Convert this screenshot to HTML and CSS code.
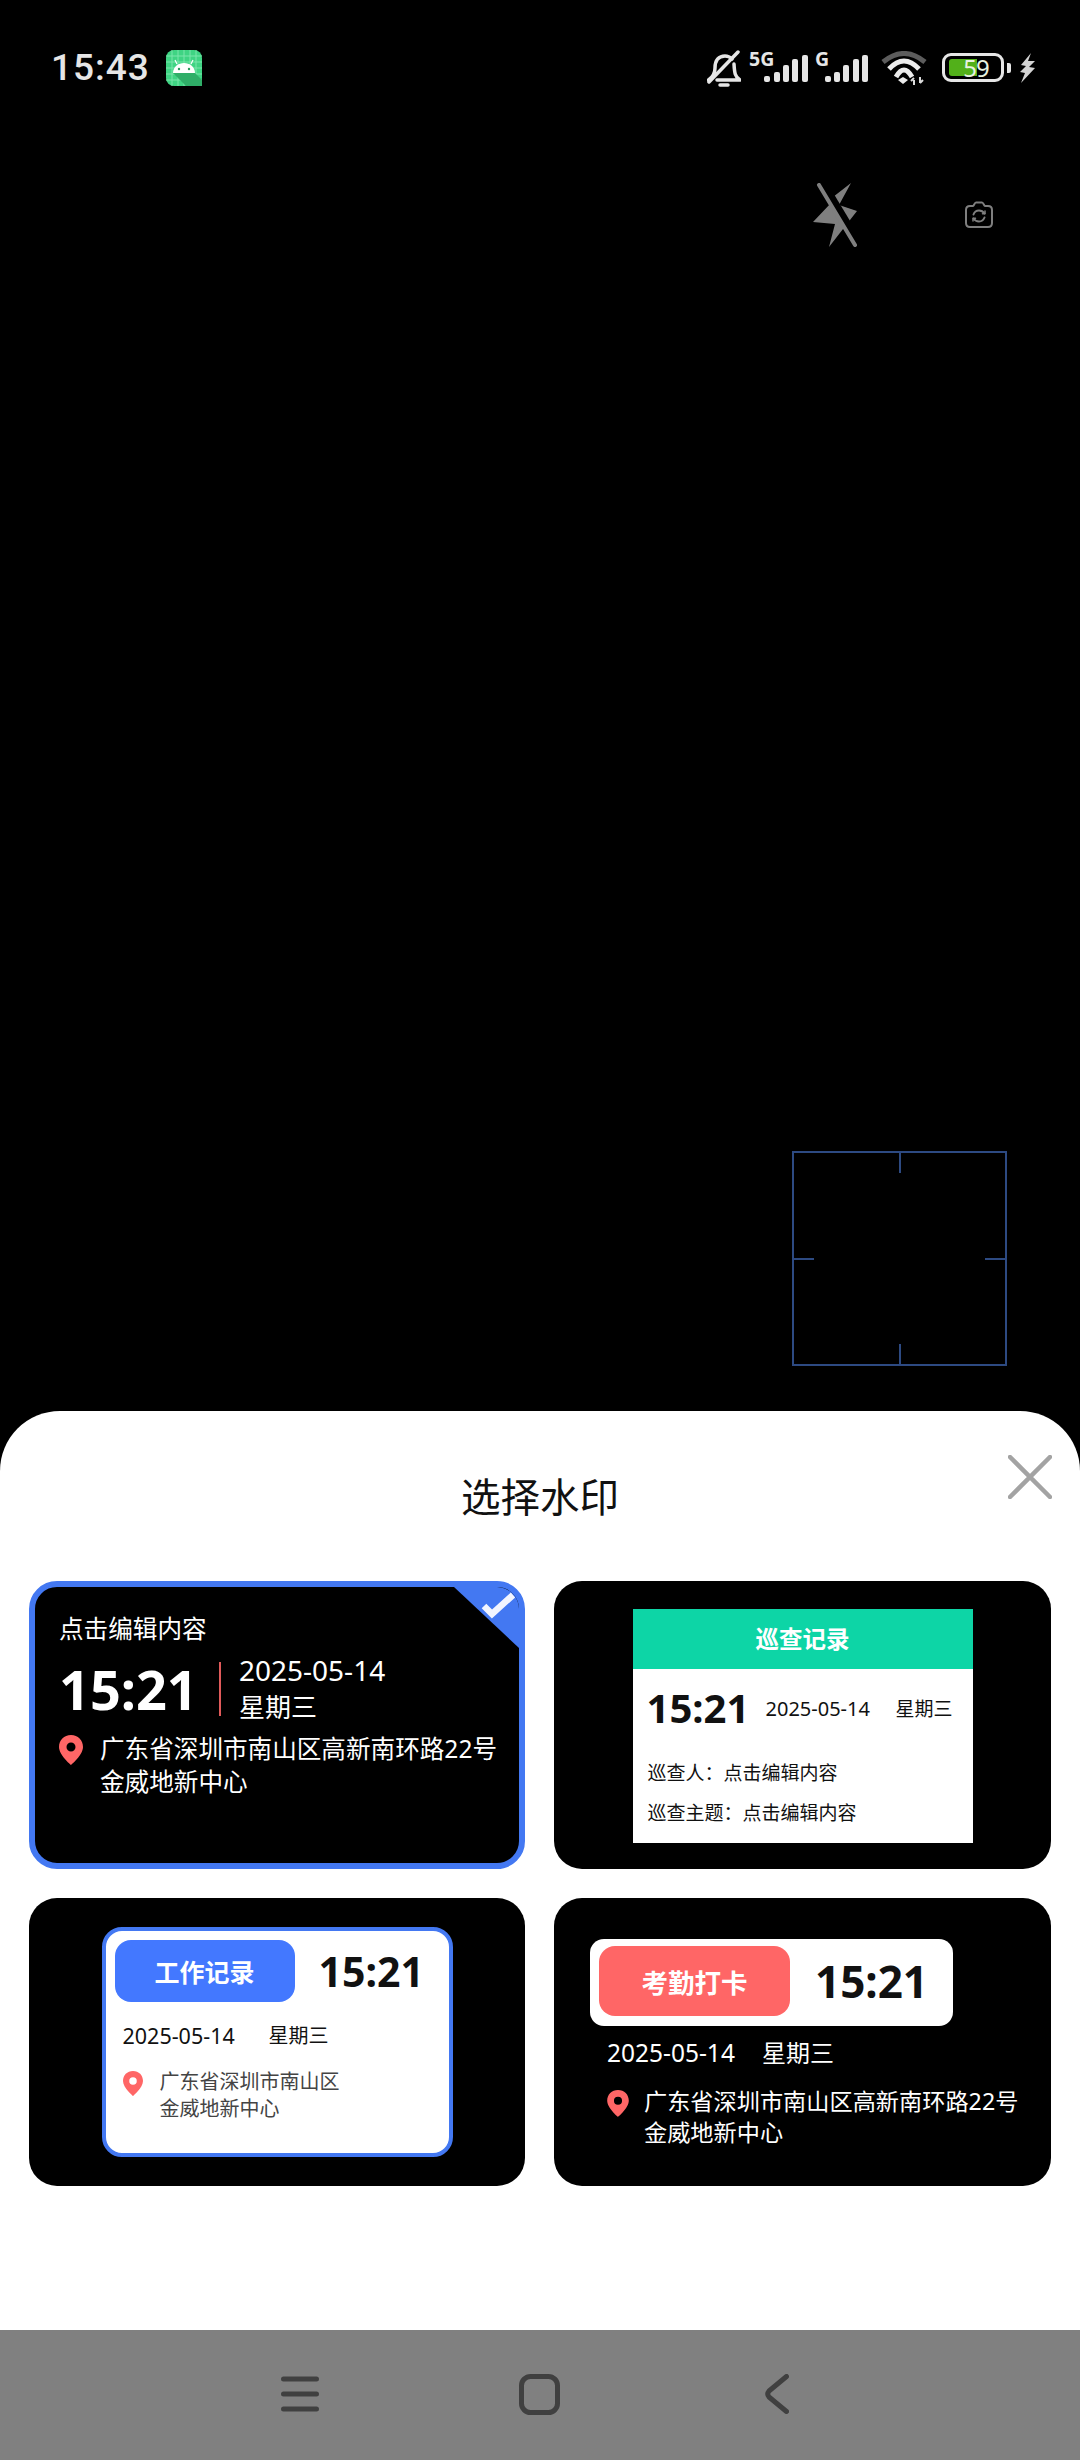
FILE: index.html
```html
<!DOCTYPE html>
<html lang="zh-CN">
<head>
<meta charset="utf-8">
<title>选择水印</title>
<link rel="stylesheet" href="styles.css">
</head>
<body>
<div class="page">
  <header class="status">
    <span class="clock">15:43</span>
    <svg class="app-icon" viewBox="0 0 36 36">
      <rect width="36" height="36" rx="8" fill="#3fd483"/>
      <path d="M6 0V36M12 0V36M18 0V36M24 0V36M30 0V36M0 6H36M0 12H36M0 18H36M0 24H36M0 30H36" stroke="#7be6ab" stroke-width="1"/>
      <path d="M7 23H29L36 30V36H20Z" fill="#2fae68"/>
      <path d="M7 23C7 17 12 13 18 13C24 13 29 17 29 23Z" fill="#fff"/>
      <path d="M11 14L9 10M25 14L27 10" stroke="#fff" stroke-width="1.2"/>
      <circle cx="13" cy="19" r="1.2" fill="#2a9a5c"/><circle cx="23" cy="19" r="1.2" fill="#2a9a5c"/>
    </svg>
    <svg class="st-bell" viewBox="0 0 34 37" fill="none" stroke="#e6e6e6" stroke-width="3.5" stroke-linecap="round" stroke-linejoin="round">
      <path d="M1.500 30C6 27 8 24 8 18C8 10 12 6 18 6C21 6 23 7 25 9"/>
      <path d="M27 14C27.500 23 28 27 33 30H10"/>
      <path d="M13 35H21"/>
      <path d="M2 32L31 2"/>
    </svg>
    <svg class="st-sig st-sig1" viewBox="0 0 59 37" fill="#e6e6e6">
      <text x="0" y="21" class="sig-label">5G</text>
      <rect x="15" y="31" width="6" height="6" rx="2"/><rect x="25" y="27" width="6" height="10" rx="2"/><rect x="34" y="20" width="6" height="17" rx="2"/><rect x="43" y="14" width="6" height="23" rx="2"/><rect x="53" y="10" width="6" height="27" rx="2"/>
    </svg>
    <svg class="st-sig st-sig2" viewBox="0 0 53 37" fill="#e6e6e6">
      <text x="0" y="21" class="sig-label">G</text>
      <rect x="10" y="31" width="6" height="6" rx="2"/><rect x="19" y="27" width="6" height="10" rx="2"/><rect x="28" y="20" width="6" height="17" rx="2"/><rect x="38" y="14" width="6" height="23" rx="2"/><rect x="47" y="10" width="6" height="27" rx="2"/>
    </svg>
    <svg class="st-wifi" viewBox="0 0 46 34" fill="none">
      <path d="M2 11Q23 -6 44 11" stroke="#5c5c5c" stroke-width="5"/>
      <path d="M8 18Q23 2 38 18" stroke="#ececec" stroke-width="5"/>
      <path d="M15 26Q23 12 31 26" stroke="#ececec" stroke-width="5"/>
      <path d="M17 29L22 26L27 29L22 33Z" fill="#ececec"/>
      <path d="M33 34V29M30 30L33 27M39 26V32M39 32L42 29" stroke="#dcdcdc" stroke-width="2"/>
    </svg>
    <div class="battery">
      <div class="batt-body"><span class="batt-fill"></span><span class="batt-num">59</span></div>
      <span class="batt-nib"></span>
    </div>
    <svg class="st-bolt" viewBox="0 0 17 30" fill="#d4d4d4"><path d="M12 0L2 12L7 13L1 19L6 20L2 30L16 15L10 14L16 8L9 8Z"/></svg>
  </header>

  <main class="camera">
    <div class="cam-tools">
      <svg class="flash" viewBox="0 0 44 64">
        <path d="M38 0L20 14L18 20L0 39L22 41L16 64L30 46L44 28L26 22Z" fill="#7f7f7f"/>
        <path d="M9 0L45 60" stroke="#000" stroke-width="9"/>
        <path d="M6 2L42 62" stroke="#7f7f7f" stroke-width="4" stroke-linecap="round"/>
      </svg>
      <svg class="flip" viewBox="0 0 28 27" fill="none" stroke="#7f7f7f" stroke-width="2" stroke-linecap="round" stroke-linejoin="round">
        <path d="M5 5H8C9 5 9.500 1.500 11 1.500H17C18.500 1.500 19 5 20 5H23C25.500 5 27 6.500 27 9V22C27 24.500 25.500 26 23 26H5C2.500 26 1 24.500 1 22V9C1 6.500 2.500 5 5 5Z"/>
        <path d="M8.500 13.500C9.500 10.500 12 9.500 14 9.500C16.500 9.500 18.500 11 19.500 12.500"/>
        <path d="M19.500 16.500C18.500 19 16 20.500 14 20.500C11.500 20.500 9.500 19 8.500 17.500"/>
        <path d="M20 10V12.800H17.500M8 20V17.200H10.500" stroke-width="1.500"/>
      </svg>
    </div>
    <div class="focus"><i class="tick t"></i><i class="tick b"></i><i class="tick l"></i><i class="tick r"></i></div>
  </main>

  <section class="sheet">
    <h1 class="sheet-title">选择水印</h1>
    <svg class="close" viewBox="0 0 44 44" fill="none" stroke="#a3a3a3" stroke-width="4.500" stroke-linecap="round"><path d="M2 2L42 42M42 2L2 42"/></svg>
    <div class="grid">

      <article class="card card-a">
        <svg class="corner" viewBox="0 0 65 61"><path d="M0 0H65V61Z" fill="#4378f2"/><path d="M30 19L38 27L59 8" fill="none" stroke="#f2f5ff" stroke-width="6.500"/></svg>
        <p class="a-note">点击编辑内容</p>
        <div class="a-row">
          <span class="time a-time">15:21</span>
          <span class="a-rule"></span>
          <div class="a-date"><div>2025-05-14</div><div class="a-week">星期三</div></div>
        </div>
        <div class="addr a-addr">
          <svg class="pin a-pin" viewBox="0 0 24 30"><path fill-rule="evenodd" fill="#ff6666" d="M12 0C5 0 0 5 0 12C0 20 12 30 12 30C12 30 24 20 24 12C24 5 19 0 12 0ZM12 7.500A4.500 4.500 0 1 1 12 16.500A4.500 4.500 0 1 1 12 7.500Z"/></svg>
          <p>广东省深圳市南山区高新南环路22号<br>金威地新中心</p>
        </div>
      </article>

      <article class="card card-b">
        <div class="b-panel">
          <div class="b-head">巡查记录</div>
          <div class="b-row">
            <span class="time b-time">15:21</span>
            <span class="b-date">2025-05-14</span>
            <span class="b-week">星期三</span>
          </div>
          <p class="b-line b-first">巡查人：点击编辑内容</p>
          <p class="b-line">巡查主题：点击编辑内容</p>
        </div>
      </article>

      <article class="card card-c">
        <div class="c-panel">
          <div class="c-top">
            <span class="chip c-chip">工作记录</span>
            <span class="time c-time">15:21</span>
          </div>
          <div class="c-date"><span>2025-05-14</span><span class="c-week">星期三</span></div>
          <div class="addr c-addr">
            <svg class="pin c-pin" viewBox="0 0 24 30"><path fill-rule="evenodd" fill="#ff6666" d="M12 0C5 0 0 5 0 12C0 20 12 30 12 30C12 30 24 20 24 12C24 5 19 0 12 0ZM12 7.500A4.500 4.500 0 1 1 12 16.500A4.500 4.500 0 1 1 12 7.500Z"/></svg>
            <p>广东省深圳市南山区<br>金威地新中心</p>
          </div>
        </div>
      </article>

      <article class="card card-d">
        <div class="d-panel">
          <span class="chip d-chip">考勤打卡</span>
          <span class="time d-time">15:21</span>
        </div>
        <div class="d-date"><span>2025-05-14</span><span class="d-week">星期三</span></div>
        <div class="addr d-addr">
          <svg class="pin d-pin" viewBox="0 0 24 30"><path fill-rule="evenodd" fill="#ff6666" d="M12 0C5 0 0 5 0 12C0 20 12 30 12 30C12 30 24 20 24 12C24 5 19 0 12 0ZM12 7.500A4.500 4.500 0 1 1 12 16.500A4.500 4.500 0 1 1 12 7.500Z"/></svg>
          <p>广东省深圳市南山区高新南环路22号<br>金威地新中心</p>
        </div>
      </article>

    </div>
  </section>

  <nav class="navbar">
    <svg class="nav-menu" viewBox="0 0 38 36" fill="none" stroke="#404040" stroke-width="5" stroke-linecap="round"><path d="M2.500 3H35.500M2.500 18H35.500M2.500 33H35.500"/></svg>
    <svg class="nav-home" viewBox="0 0 41 41" fill="none" stroke="#404040" stroke-width="5"><rect x="2.500" y="2.500" width="36" height="36" rx="9"/></svg>
    <svg class="nav-back" viewBox="0 0 24 40" fill="none" stroke="#404040" stroke-width="5" stroke-linecap="round" stroke-linejoin="round"><path d="M21.500 2.500L4 17Q1.500 20 4 23L21.500 37.500"/></svg>
  </nav>
</div>
</body>
</html>
```

FILE: styles.css
```css
* { box-sizing: border-box; }
html, body { margin: 0; padding: 0; background: #000; }
body { font-family: "Noto Sans", "Noto Sans CJK SC", sans-serif; }
p, h1 { margin: 0; }

.page { width: 1080px; height: 2460px; display: flex; flex-direction: column; overflow: hidden; }

/* status bar */
.status { height: 136px; display: flex; align-items: center; padding: 0 44px 0 51px; flex: none; }
.clock { font-family: Roboto, sans-serif; font-weight: 500; font-size: 37px; letter-spacing: 1px; color: #e6e6e6; line-height: 44px; width: 115px; }
.app-icon { width: 36px; height: 36px; }
.st-bell { width: 34px; height: 37px; margin-left: auto; }
.st-sig { height: 37px; margin-top: -9px; }
.st-sig1 { width: 59px; margin-left: 8px; }
.st-sig2 { width: 53px; margin-left: 7px; }
.sig-label { font-family: "Noto Sans", sans-serif; font-weight: 700; font-size: 19.5px; }
.st-wifi { width: 46px; height: 34px; margin-left: 13px; }
.battery { display: flex; align-items: center; margin-left: 15px; }
.batt-body { position: relative; width: 62px; height: 29px; border: 3px solid #e6e6e6; border-radius: 9px; display: flex; align-items: center; justify-content: center; margin-top: -1px; }
.batt-fill { position: absolute; left: 4px; top: 3px; bottom: 3px; width: 28px; background: #52b01a; border-radius: 3px 0 0 3px; }
.batt-num { position: relative; font-size: 24px; line-height: 23px; letter-spacing: -1px; color: #e8f2e0; margin-left: 6px; }
.batt-nib { width: 4px; height: 10px; background: #e6e6e6; border-radius: 0 2px 2px 0; margin-left: 3px; }
.st-bolt { width: 17px; height: 30px; margin-left: 8px; }

/* camera */
.camera { flex: 1; position: relative; }
.cam-tools { display: flex; align-items: flex-start; padding: 47px 87px 0 0; justify-content: flex-end; }
.flash { width: 44px; height: 64px; }
.flip { width: 28px; height: 27px; margin-left: 108px; margin-top: 18px; }
.focus { position: absolute; left: 792px; top: 1015px; width: 215px; height: 215px; border: 2px solid #2d4a82; }
.tick { position: absolute; background: #2d4a82; }
.tick.t, .tick.b { width: 2px; height: 20px; left: 105px; }
.tick.l, .tick.r { width: 20px; height: 2px; top: 105px; }
.tick.t { top: 0; } .tick.b { bottom: 0; } .tick.l { left: 0; } .tick.r { right: 0; }

/* sheet */
.sheet { position: relative; flex: none; height: 919px; background: #fff; border-radius: 60px 60px 0 0; padding: 61px 29px 0; }
.sheet-title { font-weight: 400; font-size: 39.5px; line-height: 50px; text-align: center; color: #111; }
.close { position: absolute; left: 1008px; top: 44px; width: 44px; height: 44px; }
.grid { display: grid; grid-template-columns: 496px 497px; grid-auto-rows: 288px; column-gap: 29px; row-gap: 29px; margin-top: 59px; }

.card { position: relative; background: #000; border-radius: 28px; overflow: hidden; color: #fff; }
.time { font-weight: 700; }
.addr { display: flex; align-items: flex-start; }
.addr p { white-space: nowrap; }
.pin { flex: none; }
.chip { display: flex; align-items: center; justify-content: center; font-weight: 700; color: #fff; flex: none; }

/* card a */
.card-a { border: 6px solid #4378f2; padding: 25px 0 0 24px; }
.corner { position: absolute; right: 0; top: 0; width: 65px; height: 61px; }
.a-note { font-size: 24.6px; line-height: 34px; }
.a-row { display: flex; align-items: center; margin-top: 6px; }
.a-time { font-size: 54px; line-height: 60px; width: 131px; white-space: nowrap; }
.a-rule { width: 2px; height: 54px; background: #e05a5a; margin-left: 29px; margin-top: -1px; }
.a-date { margin-left: 18px; font-size: 28px; line-height: 37px; }
.a-week { font-size: 26px; }
.a-addr { margin-top: 6px; font-size: 24.6px; line-height: 33px; }
.a-pin { width: 24px; height: 30px; margin-top: 3px; margin-right: 17px; }

/* card b */
.card-b { display: flex; align-items: center; justify-content: center; }
.b-panel { width: 340px; height: 234px; background: #fff; color: #111; margin-top: 2px; }
.b-head { height: 60px; background: #0dd5a6; color: #fff; font-weight: 700; font-size: 23.5px; line-height: 60px; text-align: center; }
.b-row { display: flex; align-items: center; height: 40px; margin-top: 19px; padding-left: 14px; }
.b-time { font-size: 40px; line-height: 40px; width: 98px; margin-right: 21px; white-space: nowrap; }
.b-date { font-size: 20px; width: 104px; margin-right: 26px; white-space: nowrap; }
.b-week { font-size: 19px; }
.b-line { font-size: 19px; line-height: 40px; padding-left: 15px; white-space: nowrap; }
.b-first { margin-top: 25px; }

/* card c */
.card-c { display: flex; align-items: center; justify-content: center; }
.c-panel { width: 351px; height: 230px; background: #fff; border: 4px solid #4378f2; border-radius: 20px; color: #111; padding: 9px; }
.c-top { display: flex; align-items: center; }
.c-chip { width: 180px; height: 62px; background: #4378ff; border-radius: 16px; font-size: 25px; }
.c-time { font-size: 41px; line-height: 50px; margin-left: 24px; }
.c-date { display: flex; margin: 19px 0 0 8px; font-size: 21.5px; line-height: 30px; }
.c-date span:first-child { width: 113px; white-space: nowrap; }
.c-week { margin-left: 33px; font-size: 20px; }
.c-addr { margin: 17px 0 0 8px; font-size: 20px; line-height: 27px; color: #444; }
.c-pin { width: 20px; height: 25px; margin-top: 3px; margin-right: 17px; }

/* card d */
.card-d { padding: 41px 0 0 36px; }
.d-panel { display: flex; align-items: center; width: 363px; height: 87px; background: #fff; border-radius: 14px; padding: 0 0 3px 9px; color: #111; }
.d-chip { width: 191px; height: 70px; background: #ff6666; border-radius: 16px; font-size: 26.5px; }
.d-time { font-size: 44px; line-height: 50px; margin-left: 25px; }
.d-date { display: flex; margin: 10px 0 0 17px; font-size: 24.5px; line-height: 34px; }
.d-date span:first-child { width: 128px; white-space: nowrap; }
.d-week { margin-left: 27px; font-size: 24px; }
.d-addr { margin: 16px 0 0 17px; font-size: 23.2px; line-height: 31px; }
.d-pin { width: 22px; height: 27px; margin-top: 4px; margin-right: 15px; }

/* nav */
.navbar { flex: none; height: 130px; background: #808080; display: flex; align-items: flex-start; padding: 44px 0 0 281px; }
.nav-menu { width: 38px; height: 36px; margin-top: 2px; }
.nav-home { width: 41px; height: 41px; margin-left: 200px; }
.nav-back { width: 24px; height: 40px; margin-left: 205px; }
```
